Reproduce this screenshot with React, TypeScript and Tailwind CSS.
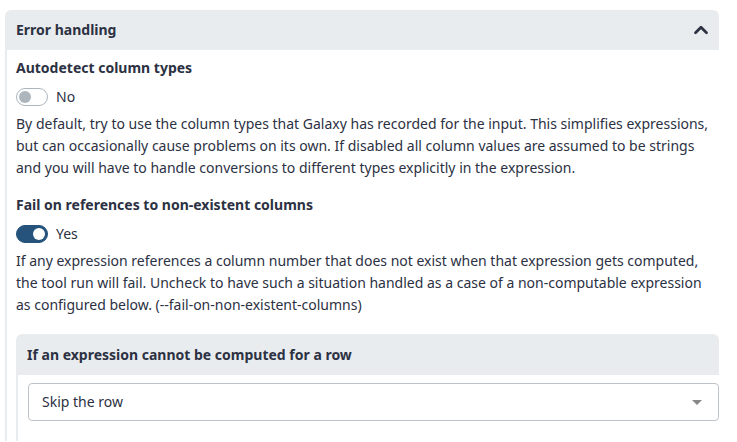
import { ChevronUp } from "lucide-react";

function Toggle({ on, label }: { on: boolean; label: string }) {
  return (
    <div className="flex items-center gap-2 h-[22px]">
      {on ? (
        <span className="relative inline-block h-[18px] w-[32px] rounded-full border border-[#25537b] bg-[#25537b]">
          <span className="absolute right-[2px] top-[2px] h-[12px] w-[12px] rounded-full bg-white" />
        </span>
      ) : (
        <span className="relative inline-block h-[18px] w-[32px] rounded-full border border-[#adb5bd] bg-white">
          <span className="absolute left-[2px] top-[2px] h-[12px] w-[12px] rounded-full bg-[#adb5bd]" />
        </span>
      )}
      <span>{label}</span>
    </div>
  );
}

export default function App() {
  return (
    <div
      className="min-h-[442px] bg-white pl-[5px] pr-[18px] pt-[10px] text-[14px] leading-[22px] text-[#2c3143]"
      style={{ fontFamily: '"Noto Sans", sans-serif' }}
    >
      <div>
        <div className="flex h-[40px] items-center justify-between rounded-t-[6px] bg-[#e9ecef] pl-[11px] pr-[7px]">
          <span className="font-bold">Error handling</span>
          <ChevronUp size={22} strokeWidth={3} className="text-[#2c3143]" />
        </div>
        <div className="border-l-2 border-[#e9ecef] pl-[9px] pt-[7px]">
          <div className="font-bold">Autodetect column types</div>
          <div className="mt-[7px]">
            <Toggle on={false} label="No" />
          </div>
          <p className="mt-[5px]">
            By default, try to use the column types that Galaxy has recorded for the input. This simplifies expressions,
            but can occasionally cause problems on its own. If disabled all column values are assumed to be strings
            and you will have to handle conversions to different types explicitly in the expression.
          </p>
          <div className="mt-[15px] font-bold">Fail on references to non-existent columns</div>
          <div className="mt-[7px]">
            <Toggle on={true} label="Yes" />
          </div>
          <p className="mt-[5px]">
            If any expression references a column number that does not exist when that expression gets computed,
            the tool run will fail. Uncheck to have such a situation handled as a case of a non-computable expression
            as configured below. (--fail-on-non-existent-columns)
          </p>
          <div className="mt-[18px]">
            <div className="flex h-[41px] items-center rounded-t-[6px] bg-[#e9ecef] pl-[11px]">
              <span className="font-bold">If an expression cannot be computed for a row</span>
            </div>
            <div className="border-l-2 border-[#e9ecef] pl-[10px] pt-[8px] pb-[20px]">
              <div className="flex h-[38px] items-center justify-between rounded-[4px] border border-[#bfc4ca] bg-white pl-[13px] pr-[16px]">
                <span>Skip the row</span>
                <span className="h-0 w-0 border-x-[5px] border-t-[5px] border-x-transparent border-t-[#888]" />
              </div>
            </div>
          </div>
        </div>
      </div>
    </div>
  );
}
